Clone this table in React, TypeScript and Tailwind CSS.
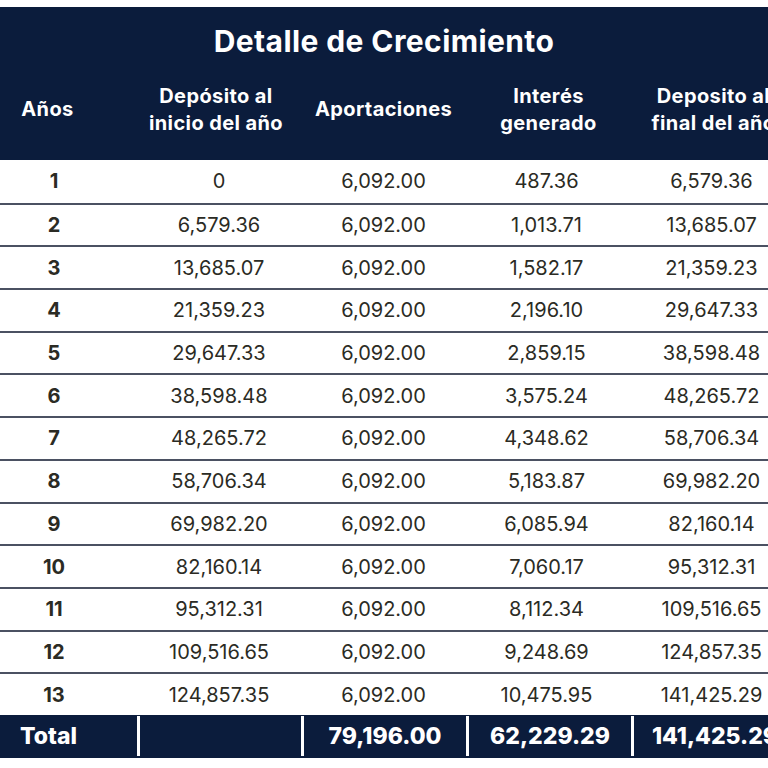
const rows = [
  ['1', '0', '6,092.00', '487.36', '6,579.36'],
  ['2', '6,579.36', '6,092.00', '1,013.71', '13,685.07'],
  ['3', '13,685.07', '6,092.00', '1,582.17', '21,359.23'],
  ['4', '21,359.23', '6,092.00', '2,196.10', '29,647.33'],
  ['5', '29,647.33', '6,092.00', '2,859.15', '38,598.48'],
  ['6', '38,598.48', '6,092.00', '3,575.24', '48,265.72'],
  ['7', '48,265.72', '6,092.00', '4,348.62', '58,706.34'],
  ['8', '58,706.34', '6,092.00', '5,183.87', '69,982.20'],
  ['9', '69,982.20', '6,092.00', '6,085.94', '82,160.14'],
  ['10', '82,160.14', '6,092.00', '7,060.17', '95,312.31'],
  ['11', '95,312.31', '6,092.00', '8,112.34', '109,516.65'],
  ['12', '109,516.65', '6,092.00', '9,248.69', '124,857.35'],
  ['13', '124,857.35', '6,092.00', '10,475.95', '141,425.29'],
]

const cols = 'grid grid-cols-[137px_164px_165px_165px_165px] w-[796px]'

export default function App() {
  return (
    <div
      className="w-[768px] h-[768px] overflow-hidden bg-white pt-[7px]"
      style={{ fontFamily: 'Inter, "Open Sans", sans-serif' }}
    >
      {/* Header */}
      <div className="bg-[#0b1c3c] h-[153px] text-white">
        <div className="w-[768px] h-[66px] flex items-center justify-center pt-[3px]">
          <h1 className="text-[30px] font-bold tracking-[0.4px]">Detalle de Crecimiento</h1>
        </div>
        <div className={`${cols} h-[87px] items-center text-[20px] font-bold leading-[27px] tracking-[0.4px] text-center pb-[14px]`}>
          <div className="pr-[42px]">Años</div>
          <div className="pr-[6px]">Depósito al<br />inicio del año</div>
          <div>Aportaciones</div>
          <div>Interés<br />generado</div>
          <div>Deposito al<br />final del año</div>
        </div>
      </div>

      {/* Body */}
      <div className="text-[#2b2b24] text-[20px]">
        {rows.map((r, i) => (
          <div
            key={r[0]}
            className={`${cols} h-[42.7px] items-center text-center ${i > 0 ? 'border-t-2 border-[#4b5162]' : ''}`}
          >
            <div className="pr-[29px] font-bold">{r[0]}</div>
            <div>{r[1]}</div>
            <div>{r[2]}</div>
            <div className="pr-[4px]">{r[3]}</div>
            <div className="pr-[4px]">{r[4]}</div>
          </div>
        ))}
      </div>

      {/* Total */}
      <div className={`${cols} h-[43px] bg-[#0b1c3c] text-white text-[23px] font-extrabold items-center text-center`}>
        <div className="pr-[40px]">Total</div>
        <div className="h-[40px] border-l-[3px] border-white"></div>
        <div className="h-[40px] flex items-center justify-center border-l-[3px] border-white">79,196.00</div>
        <div className="h-[40px] flex items-center justify-center border-l-[3px] border-white">62,229.29</div>
        <div className="h-[40px] flex items-center justify-center border-l-[3px] border-white">141,425.29</div>
      </div>
    </div>
  )
}
